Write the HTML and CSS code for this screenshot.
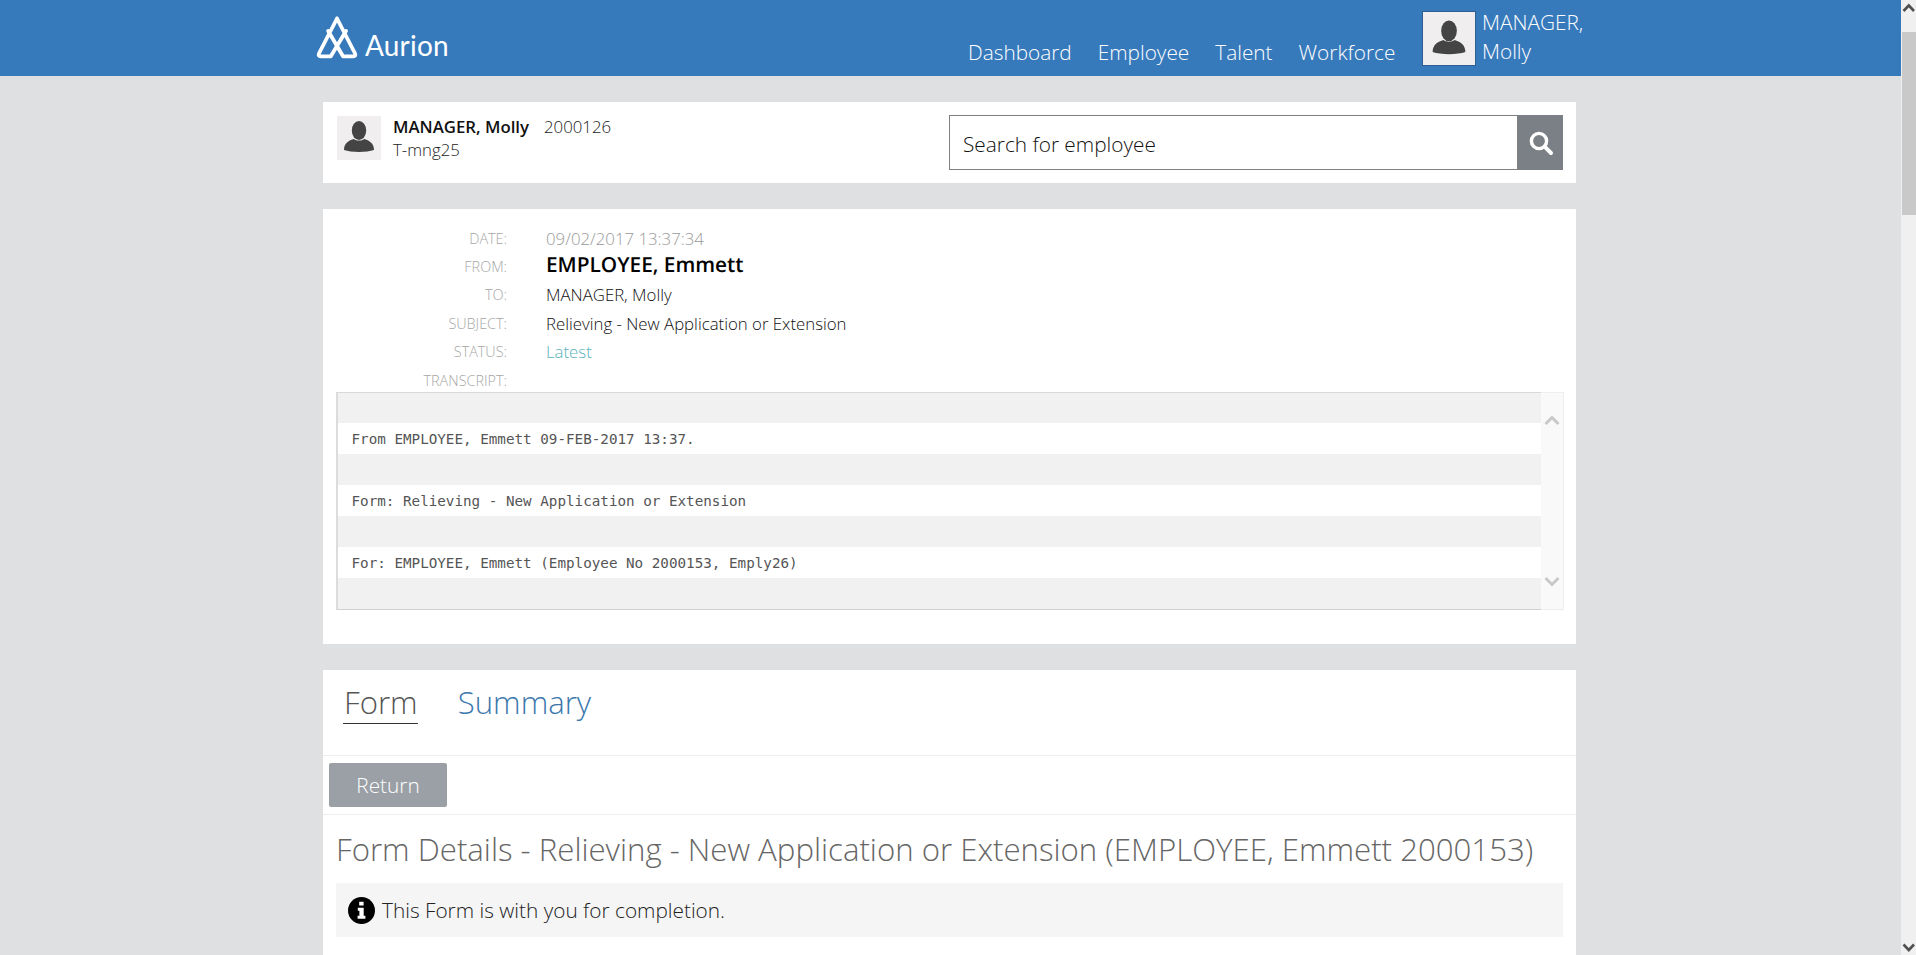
FILE: index.html
```html
<!DOCTYPE html>
<html lang="en">
<head>
<meta charset="utf-8">
<title>Aurion</title>
<link rel="stylesheet" href="styles.css">
</head>
<body>
<div class="page">
  <div class="main">
    <header class="topbar">
      <div class="logo">
        <svg class="logo-mark" width="44" height="44" viewBox="0 0 44 44" aria-hidden="true">
          <path d="M21 2.500 L3.200 37 Q1.600 40.300 5 40.300 L14.800 40.300 L30 15 M21 2.500 L38.800 37 Q40.400 40.300 37 40.300 L27 40.300 L12.200 15" fill="none" stroke="#fff" stroke-width="3.800" stroke-linejoin="round" stroke-linecap="round"/>
        </svg>
        <span class="logo-text">Aurion</span>
      </div>
      <nav class="nav">
        <a class="nav-link">Dashboard</a>
        <a class="nav-link">Employee</a>
        <a class="nav-link">Talent</a>
        <a class="nav-link">Workforce</a>
      </nav>
      <div class="user">
        <div class="avatar avatar-lg">
          <svg viewBox="0 0 44 44" width="44" height="44" aria-hidden="true"><use href="#person"/></svg>
        </div>
        <div class="user-name">MANAGER,<br>Molly</div>
      </div>
    </header>

    <section class="card card-emp">
      <div class="emp">
        <div class="avatar avatar-sm">
          <svg viewBox="0 0 44 44" width="44" height="44" aria-hidden="true"><use href="#person"/></svg>
        </div>
        <div class="emp-text">
          <div><strong class="emp-name">MANAGER, Molly</strong><span class="emp-no">2000126</span></div>
          <div>T-mng25</div>
        </div>
      </div>
      <div class="search">
        <div class="search-input">Search for employee</div>
        <div class="search-btn">
          <svg width="26" height="26" viewBox="0 0 26 26" aria-hidden="true">
            <circle cx="11" cy="11" r="7.600" fill="none" stroke="#fff" stroke-width="3.400"/>
            <path d="M16.600 16.600 L23 23" stroke="#fff" stroke-width="4" stroke-linecap="round"/>
          </svg>
        </div>
      </div>
    </section>

    <section class="card card-msg">
      <dl class="meta">
        <dt>DATE:</dt><dd class="v-date">09/02/2017 13:37:34</dd>
        <dt>FROM:</dt><dd class="v-from">EMPLOYEE, Emmett</dd>
        <dt>TO:</dt><dd>MANAGER, Molly</dd>
        <dt>SUBJECT:</dt><dd>Relieving - New Application or Extension</dd>
        <dt>STATUS:</dt><dd class="v-status">Latest</dd>
        <dt>TRANSCRIPT:</dt><dd></dd>
      </dl>
      <div class="transcript">
        <div class="lines">
          <div class="line"></div>
          <div class="line">From EMPLOYEE, Emmett 09-FEB-2017 13:37.</div>
          <div class="line"></div>
          <div class="line">Form: Relieving - New Application or Extension</div>
          <div class="line"></div>
          <div class="line">For: EMPLOYEE, Emmett (Employee No 2000153, Emply26)</div>
          <div class="line"></div>
        </div>
        <div class="t-scroll">
          <svg width="16" height="11" viewBox="0 0 16 11" aria-hidden="true"><path d="M1.500 9 L8 2.500 L14.500 9" fill="none" stroke="#c8c8c8" stroke-width="3"/></svg>
          <svg width="16" height="11" viewBox="0 0 16 11" aria-hidden="true"><path d="M1.500 2 L8 8.500 L14.500 2" fill="none" stroke="#c8c8c8" stroke-width="3"/></svg>
        </div>
      </div>
    </section>

    <section class="card card-form">
      <div class="tabs">
        <a class="tab tab-active">Form</a>
        <a class="tab tab-link">Summary</a>
      </div>
      <div class="actions"><button class="btn" type="button">Return</button></div>
      <div class="details">
        <h1 class="title">Form Details - Relieving - New Application or Extension (EMPLOYEE, Emmett 2000153)</h1>
        <div class="alert">
          <svg width="27" height="27" viewBox="0 0 27 27" aria-hidden="true">
            <circle cx="13.500" cy="13.500" r="13.500" fill="#000"/>
            <path d="M11.200 4.800 h4.400 v3.800 h-4.400 z M9.800 10.800 h5.900 v8 h1.700 v3 H9.600 v-3 h1.800 v-5 H9.800 z" fill="#fff"/>
          </svg>
          <span>This Form is with you for completion.</span>
        </div>
      </div>
    </section>
  </div>

  <aside class="scrollbar">
    <svg width="15" height="15" viewBox="0 0 15 15" aria-hidden="true"><path d="M2.500 11 L7.800 5.500 L13 11" fill="none" stroke="#505050" stroke-width="2.600"/></svg>
    <div class="thumb-track"><div class="thumb"></div></div>
    <svg width="15" height="15" viewBox="0 0 15 15" aria-hidden="true"><path d="M2.500 4.500 L7.800 10 L13 4.500" fill="none" stroke="#505050" stroke-width="2.600"/></svg>
  </aside>
</div>

<svg class="defs" width="0" height="0" aria-hidden="true">
  <symbol id="person" viewBox="0 0 44 44">
    <ellipse cx="22" cy="14.500" rx="7.200" ry="9.500" fill="#444"/>
    <path d="M7 34 C7 27 12 24.500 17 23 C19 25 25 25 27 23 C32 24.500 37 27 37 34 C30 36.500 14 36.500 7 34 Z" fill="#444"/>
  </symbol>
</svg>
</body>
</html>
```

FILE: styles.css
```css
* { box-sizing: border-box; }
html, body { margin: 0; height: 100%; overflow: hidden; }
body {
  font-family: "Open Sans", "Liberation Sans", sans-serif;
  font-weight: 300;
  color: #111;
  background: #dee0e2;
}
.page { display: flex; height: 955px; }
.main { flex: 1; min-width: 0; overflow: hidden; }
.defs { position: absolute; }

.topbar {
  height: 76px;
  background: #377abc;
  color: #fff;
  display: flex;
  padding-left: 316px;
}
.logo { display: flex; align-items: flex-end; padding-bottom: 17px; width: 633px; flex: none; }
.logo-mark { margin-bottom: -1px; margin-right: 6px; flex: none; }
.logo-text {
  font-family: "Lato", sans-serif;
  font-weight: 400;
  font-size: 28px;
  line-height: 28px;
  letter-spacing: 0.2px;
  margin-left: -1px;
}
.nav { display: flex; gap: 26px; align-items: flex-end; width: 473px; flex: none; padding: 0 0 7px 19px; }
.nav-link { font-size: 20.800px; line-height: 34px; }
.user { display: flex; gap: 6px; padding-top: 11px; flex: none; }
.avatar { display: flex; align-items: center; justify-content: center; background: #f0eeee; flex: none; }
.avatar-lg { width: 54px; height: 55px; border: 1px solid #2f5f92; }
.avatar-lg svg { width: 48px; height: 48px; }
.user-name { font-size: 20.800px; line-height: 29px; margin-top: -3px; }

.card { background: #fff; margin-left: 323px; width: 1253px; }
.card-emp {
  margin-top: 26px;
  height: 81px;
  padding: 13px 13px 0 14px;
  display: flex;
  justify-content: space-between;
}
.emp { display: flex; gap: 12px; align-items: flex-start; }
.avatar-sm { width: 44px; height: 44px; margin-top: 1px; }
.emp-text { font-size: 16.800px; line-height: 23px; color: #222; }
.emp-name { font-weight: 600; color: #111; margin-right: 15px; }
.search { display: flex; width: 614px; height: 55px; }
.search-input {
  flex: 1;
  border: 1px solid #808080;
  padding-left: 13px;
  font-size: 20.800px;
  line-height: 57px;
  font-weight: 300;
  color: #111;
}
.search-btn { width: 45px; background: #7a8086; display: flex; align-items: center; justify-content: center; }

.card-msg { margin-top: 26px; height: 435px; padding: 15px 12px 0 13px; }
.meta {
  margin: 0;
  display: grid;
  grid-template-columns: 171px 1fr;
  column-gap: 39px;
  grid-auto-rows: 28.400px;
  align-items: center;
}
.meta dt { text-align: right; font-size: 14.400px; color: #a6a6a6; }
.meta dd { margin: 0; font-size: 16.800px; color: #111; }
.meta .v-date { color: #9a9a9a; }
.meta .v-from { font-size: 20.800px; text-rendering: geometricPrecision; font-weight: 600; color: #000; margin-bottom: 4px; }
.meta .v-status { color: #5bb2bd; }

.transcript { display: flex; height: 218px; margin-top: -2.400px; }
.lines {
  flex: 1;
  min-width: 0;
  border-top: 1px solid #d9d9d9;
  border-left: 2px solid #dcdcdc;
  border-bottom: 1px solid #d0d0d0;
}
.line {
  height: 31px;
  padding-left: 13.500px;
  font-family: "DejaVu Sans Mono", monospace;
  font-weight: 400;
  font-size: 14.250px;
  line-height: 33px;
  color: #555;
  background: #fff;
  white-space: pre;
}
.line:nth-child(odd) { background: #f1f1f1; }
.line:first-child { height: 30px; }
.t-scroll {
  width: 23px;
  flex: none;
  display: flex;
  flex-direction: column;
  justify-content: space-between;
  align-items: center;
  padding: 22px 0 22px;
  background: #f9f9f9;
  border: 1px solid #eee;
  border-left: 0;
}

.card-form { margin-top: 26px; height: 285px; }
.tabs { display: flex; gap: 40px; padding: 12px 0 0 20px; height: 86px; border-bottom: 1px solid #eee; }
.tab { font-size: 31.200px; line-height: 40px; }
.tab-active { color: #555; border-bottom: 1px solid #333; height: 42px; padding-left: 1px; }
.tab-link { color: #3b79ac; height: 42px; }
.actions { height: 59px; padding: 7px 0 0 6px; border-bottom: 1px solid #eee; }
.btn {
  width: 118px;
  height: 44px;
  background: #9aa0a5;
  color: #fff;
  border: 0;
  border-radius: 2px;
  font: 300 20.800px "Open Sans", sans-serif;
  padding: 0;
}
.details { padding: 12px 13px 0 13px; }
.title { margin: 0; font-size: 31.200px; font-weight: 300; line-height: 44px; color: #666; white-space: nowrap; }
.alert {
  margin-top: 12px;
  height: 54px;
  background: #f5f5f5;
  padding-left: 12px;
  display: flex;
  align-items: center;
  gap: 7px;
  font-size: 20.800px;
  color: #222;
}

.scrollbar { width: 15px; flex: none; background: #f0f0f0; display: flex; flex-direction: column; }
.thumb-track { flex: 1; padding-top: 17px; }
.thumb { height: 183px; margin-left: 1px; background: #c9c9c9; }
```
